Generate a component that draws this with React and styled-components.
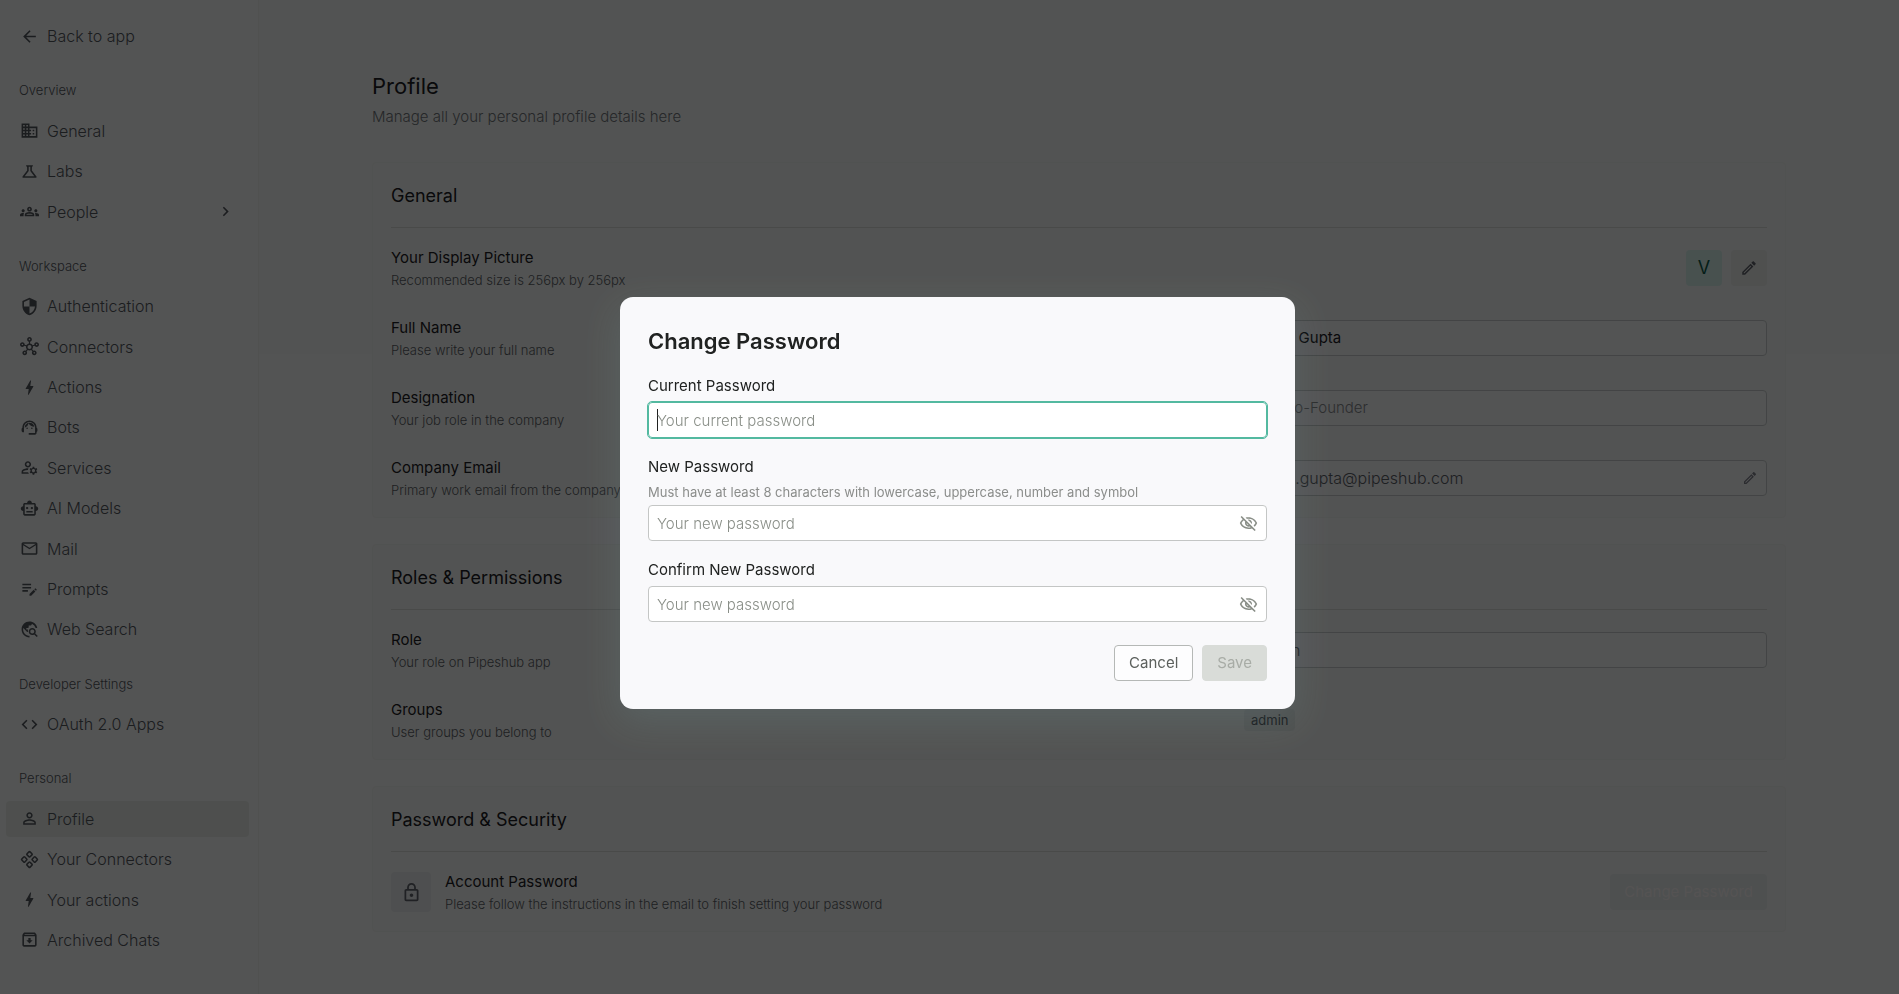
import styled, { createGlobalStyle } from "styled-components";
import {
  MdArrowBack,
  MdBolt,
  MdChevronRight,
  MdCode,
  MdDomain,
  MdEditNote,
  MdMailOutline,
  MdOutlineArchive,
  MdOutlineEdit,
  MdOutlineGroups,
  MdOutlineHub,
  MdOutlineLock,
  MdOutlineManageAccounts,
  MdOutlineScience,
  MdOutlineSmartToy,
  MdOutlineSupportAgent,
  MdOutlineTravelExplore,
  MdOutlineVisibilityOff,
  MdPersonOutline,
  MdSecurity,
} from "react-icons/md";
import { Component as ComponentIcon } from "lucide-react";

const GlobalStyle = createGlobalStyle`
  * {
    box-sizing: border-box;
  }

  body {
    margin: 0;
    background: #fafbfd;
    color: #1c2024;
    font-family: Inter, "Noto Sans", sans-serif;
    font-size: 15px;
    line-height: 24px;
  }

  h1, h2, h3, p {
    margin: 0;
    font-weight: 400;
  }

  button, input {
    font: inherit;
  }
`;

const Layout = styled.div`
  display: flex;
  min-height: 100vh;
`;

const Sidebar = styled.nav`
  flex: 0 0 259px;
  display: flex;
  flex-direction: column;
  justify-content: space-between;
  gap: 4px;
  padding: 18px 9px 36px 6px;
  background: #fafcfd;
  border-right: 1px solid #f0f3f0;
`;

const NavHeading = styled.h2`
  margin-top: 14px;
  padding-left: 13px;
  font-size: 13px;
  font-weight: 300;
  line-height: 36px;
  color: #53585e;
`;

const NavLink = styled.a`
  display: flex;
  align-items: center;
  gap: 8px;
  height: 36px;
  padding: 0 14px;
  border-radius: 4px;
  background: ${(props) => (props.$active ? "#e9eeea" : "transparent")};
  color: #53585e;
  font-size: 16px;
  font-weight: 300;
  text-decoration: none;

  & > svg {
    flex: none;
    width: 19px;
    height: 19px;
  }

  & > svg:last-child:not(:first-child) {
    margin-left: auto;
  }
`;

const Main = styled.main`
  flex: 1;
  min-width: 0;
  display: flex;
  flex-direction: column;
  gap: 26px;
  padding: 70px 113px 62px;
  background: linear-gradient(#f7faf8 354px, #fafbfd 354px);
`;

const PageHeader = styled.header`
  margin-bottom: 7px;
`;

const PageTitle = styled.h1`
  font-size: 22px;
  line-height: 32px;
`;

const PageSubtitle = styled.p`
  margin-top: 3px;
  font-weight: 300;
  color: #70757b;
`;

const Card = styled.section`
  padding: 0 18px 17px;
  background: #f7faf8;
  border: 1px solid #f1f5f2;
  border-radius: 4px;
`;

const CardTitle = styled.h2`
  margin-bottom: 18px;
  padding-top: 2px;
  border-bottom: 1px solid #dbdfdc;
  font-size: 18px;
  line-height: 62px;
`;

const Rows = styled.div`
  display: flex;
  flex-direction: column;
  gap: 26px;
`;

const Row = styled.div`
  display: flex;
  align-items: center;
  justify-content: space-between;
  height: 44px;
`;

const RowText = styled.div`
  flex: 1;
`;

const RowLabel = styled.label`
  display: block;
  font-size: 15px;
  line-height: 24px;
`;

const RowHint = styled.p`
  font-size: 13px;
  font-weight: 300;
  line-height: 20px;
  color: #5b6066;
`;

const Control = styled.div`
  display: flex;
  align-items: center;
  flex: 0 0 523px;
`;

const TextBox = styled.div`
  flex: 1;
  display: flex;
  align-items: center;
  height: 36px;
  padding: 0 8px;
  background: #fafbfd;
  border: 1px solid #c8cdce;
  border-radius: 4px;

  & input {
    flex: 1;
    min-width: 0;
    padding: 0;
    border: 0;
    outline: 0;
    background: transparent;
    color: ${(props) => (props.$muted ? "#5b6066" : "#1c2024")};
    font-size: ${(props) => (props.$muted ? "16px" : "15px")};
    font-weight: ${(props) => (props.$muted ? 300 : 400)};
  }

  & input::placeholder {
    color: #85898c;
    font-weight: 300;
  }
`;

const Avatar = styled.span`
  width: 36px;
  margin-right: 9px;
  border-radius: 4px;
  background: #d9f3ee;
  color: #0d5b49;
  font-size: 18px;
  line-height: 36px;
  text-align: center;
`;

const IconButton = styled.button`
  display: grid;
  place-items: center;
  width: 36px;
  height: 36px;
  padding: 0;
  border: 0;
  border-radius: 4px;
  background: #ecefed;
  color: #60646c;
`;

const InlineIconButton = styled.button`
  display: grid;
  padding: 0;
  border: 0;
  background: transparent;
  color: #80838d;
`;

const Badge = styled.span`
  padding: 0 7px;
  border-radius: 4px;
  background: #e9eeec;
  color: #4b5056;
  font-size: 13px;
  line-height: 22px;
`;

const LockTile = styled.span`
  display: grid;
  place-items: center;
  width: 40px;
  height: 40px;
  margin-right: 14px;
  border-radius: 4px;
  background: #e9edef;
  color: #60646c;
`;

const PrimaryButton = styled.button`
  height: 36px;
  padding: 0 14px;
  border: 0;
  border-radius: 4px;
  background: #e9eff0;
  color: #fffafa;
`;

const Overlay = styled.div`
  position: fixed;
  inset: 0;
  display: grid;
  place-items: center;
  padding: 12px 0 0 16px;
  background: rgba(0, 0, 0, 0.665);
`;

const Dialog = styled.form`
  width: 675px;
  padding: 28px;
  border-radius: 13px;
  background: #f9f9fb;
  box-shadow: 0 12px 36px rgba(115, 150, 155, 0.22);
`;

const DialogTitle = styled.h2`
  margin-bottom: 17px;
  color: #202221;
  font-size: 22px;
  font-weight: 600;
  line-height: 32px;
`;

const Fields = styled.div`
  display: flex;
  flex-direction: column;
  gap: 17px;
`;

const Field = styled.div`
  display: flex;
  flex-direction: column;
  gap: 4px;

  & > label {
    color: #202221;
    line-height: 24px;
  }

  & > p {
    color: #8b8d8b;
    font-size: 13px;
    line-height: 18px;
  }
`;

const PasswordBox = styled.div`
  display: flex;
  align-items: center;
  height: 36px;
  padding: 0 8px;
  border: 1px solid #c4c6c5;
  border-radius: 4px;
  background: #fff;

  & input {
    flex: 1;
    min-width: 0;
    height: 100%;
    padding: 0;
    border: 0;
    outline: 0;
    background: transparent;
    color: #202221;
  }

  & input::placeholder {
    color: #898e87;
    font-weight: 300;
  }

  /* steady caret while the field is still empty */
  & input:focus:placeholder-shown {
    background: linear-gradient(#202221, #202221) 0 50% / 1px 22px no-repeat;
    caret-color: transparent;
  }

  &:focus-within {
    border-color: #53b9a0;
    outline: 1px solid #53b9a0;
  }
`;

const DialogActions = styled.div`
  display: flex;
  justify-content: flex-end;
  gap: 9px;
  margin-top: 23px;
`;

const DialogButton = styled.button`
  height: 36px;
  padding: 0 14px;
  border: 1px solid ${(props) => (props.disabled ? "#d9dcd8" : "#b5b8b6")};
  border-radius: 4px;
  background: ${(props) => (props.disabled ? "#d9dcd8" : "#fdfdfe")};
  color: ${(props) => (props.disabled ? "#a8aca6" : "#5c605d")};
`;

const navItems = [
  { label: "Back to app", icon: MdArrowBack },
  { heading: "Overview" },
  { label: "General", icon: MdDomain },
  { label: "Labs", icon: MdOutlineScience },
  { label: "People", icon: MdOutlineGroups, expandable: true },
  { heading: "Workspace" },
  { label: "Authentication", icon: MdSecurity },
  { label: "Connectors", icon: MdOutlineHub },
  { label: "Actions", icon: MdBolt },
  { label: "Bots", icon: MdOutlineSupportAgent },
  { label: "Services", icon: MdOutlineManageAccounts },
  { label: "AI Models", icon: MdOutlineSmartToy },
  { label: "Mail", icon: MdMailOutline },
  { label: "Prompts", icon: MdEditNote },
  { label: "Web Search", icon: MdOutlineTravelExplore },
  { heading: "Developer Settings" },
  { label: "OAuth 2.0 Apps", icon: MdCode },
  { heading: "Personal" },
  { label: "Profile", icon: MdPersonOutline, active: true },
  { label: "Your Connectors", icon: ComponentIcon },
  { label: "Your actions", icon: MdBolt },
  { label: "Archived Chats", icon: MdOutlineArchive },
];

function SettingRow({ id, label, hint, children }) {
  return (
    <Row>
      <RowText>
        <RowLabel as={id ? "label" : "h3"} htmlFor={id}>
          {label}
        </RowLabel>
        <RowHint>{hint}</RowHint>
      </RowText>
      {children}
    </Row>
  );
}

function PasswordField({ id, label, hint, placeholder, toggle, autoFocus }) {
  return (
    <Field>
      <label htmlFor={id}>{label}</label>
      {hint && <p>{hint}</p>}
      <PasswordBox>
        <input
          id={id}
          type="password"
          placeholder={placeholder}
          autoFocus={autoFocus}
        />
        {toggle && (
          <InlineIconButton type="button" aria-label="Show password">
            <MdOutlineVisibilityOff size={19} color="#898e87" />
          </InlineIconButton>
        )}
      </PasswordBox>
    </Field>
  );
}

function ChangePasswordDialog() {
  return (
    <Overlay>
      <Dialog role="dialog" aria-modal="true" aria-labelledby="dialog-title">
        <DialogTitle id="dialog-title">Change Password</DialogTitle>
        <Fields>
          <PasswordField
            id="current-password"
            label="Current Password"
            placeholder="Your current password"
            autoFocus
          />
          <PasswordField
            id="new-password"
            label="New Password"
            hint="Must have at least 8 characters with lowercase, uppercase, number and symbol"
            placeholder="Your new password"
            toggle
          />
          <PasswordField
            id="confirm-password"
            label="Confirm New Password"
            placeholder="Your new password"
            toggle
          />
        </Fields>
        <DialogActions>
          <DialogButton type="button">Cancel</DialogButton>
          <DialogButton type="submit" disabled>
            Save
          </DialogButton>
        </DialogActions>
      </Dialog>
    </Overlay>
  );
}

function App() {
  return (
    <>
      <GlobalStyle />
      <Layout>
        <Sidebar>
          {navItems.map(({ heading, label, icon: Icon, active, expandable }) =>
            heading ? (
              <NavHeading key={heading}>{heading}</NavHeading>
            ) : (
              <NavLink key={label} href="#" $active={active}>
                <Icon />
                <span>{label}</span>
                {expandable && <MdChevronRight />}
              </NavLink>
            )
          )}
        </Sidebar>
        <Main>
          <PageHeader>
            <PageTitle>Profile</PageTitle>
            <PageSubtitle>Manage all your personal profile details here</PageSubtitle>
          </PageHeader>

          <Card>
            <CardTitle>General</CardTitle>
            <Rows>
              <SettingRow
                label="Your Display Picture"
                hint="Recommended size is 256px by 256px"
              >
                <Avatar>V</Avatar>
                <IconButton type="button" aria-label="Edit picture">
                  <MdOutlineEdit size={18} />
                </IconButton>
              </SettingRow>
              <SettingRow
                id="full-name"
                label="Full Name"
                hint="Please write your full name"
              >
                <Control>
                  <TextBox>
                    <input id="full-name" defaultValue="Varun Gupta" />
                  </TextBox>
                </Control>
              </SettingRow>
              <SettingRow
                id="designation"
                label="Designation"
                hint="Your job role in the company"
              >
                <Control>
                  <TextBox>
                    <input id="designation" placeholder="e.g. Co-Founder" />
                  </TextBox>
                </Control>
              </SettingRow>
              <SettingRow
                id="email"
                label="Company Email"
                hint="Primary work email from the company"
              >
                <Control>
                  <TextBox $muted>
                    <input
                      id="email"
                      defaultValue="varun.gupta@pipeshub.com"
                      readOnly
                    />
                    <InlineIconButton type="button" aria-label="Edit email">
                      <MdOutlineEdit size={16} />
                    </InlineIconButton>
                  </TextBox>
                </Control>
              </SettingRow>
            </Rows>
          </Card>

          <Card>
            <CardTitle>Roles &amp; Permissions</CardTitle>
            <Rows>
              <SettingRow id="role" label="Role" hint="Your role on Pipeshub app">
                <Control>
                  <TextBox $muted>
                    <input id="role" defaultValue="Admin" readOnly />
                  </TextBox>
                </Control>
              </SettingRow>
              <SettingRow label="Groups" hint="User groups you belong to">
                <Control>
                  <Badge>admin</Badge>
                </Control>
              </SettingRow>
            </Rows>
          </Card>

          <Card>
            <CardTitle>Password &amp; Security</CardTitle>
            <Row>
              <LockTile>
                <MdOutlineLock size={21} />
              </LockTile>
              <RowText>
                <RowLabel as="h3">Account Password</RowLabel>
                <RowHint>
                  Please follow the instructions in the email to finish setting
                  your password
                </RowHint>
              </RowText>
              <PrimaryButton type="button">Change Password</PrimaryButton>
            </Row>
          </Card>
        </Main>
      </Layout>
      <ChangePasswordDialog />
    </>
  );
}

export default App;
